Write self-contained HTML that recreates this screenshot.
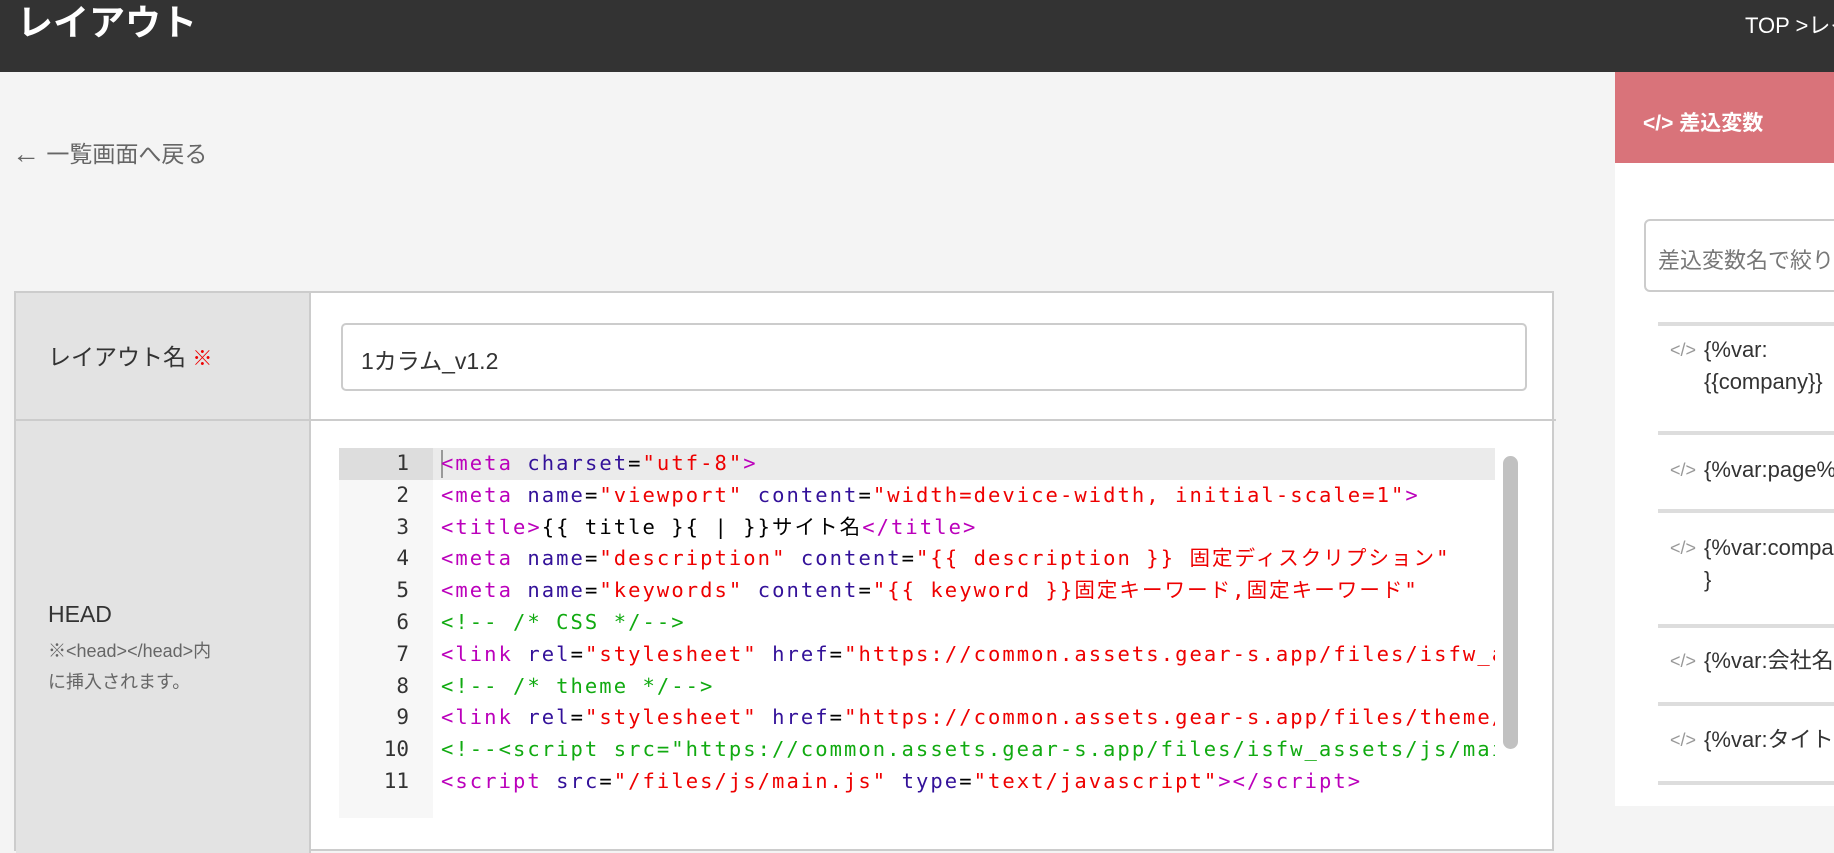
<!DOCTYPE html>
<html><head><meta charset="utf-8">
<style>
*{box-sizing:border-box;margin:0;padding:0}
body{width:1834px;height:806px;overflow:hidden;background:#f4f4f4;font-family:"Liberation Sans","Noto Sans CJK JP",sans-serif;position:relative}
.hdr{position:absolute;left:0;top:0;width:1834px;height:72px;background:#333}
.hdr h1{position:absolute;left:17px;top:0px;color:#fff;font-weight:bold;font-size:36px;line-height:46px}
.crumb{position:absolute;left:1745px;top:8px;color:#fff;font-size:22px;white-space:nowrap}
.back{position:absolute;left:12px;top:139px;color:#666;font-size:23px;line-height:30px}
.back b{font-size:28px;font-weight:normal;vertical-align:-1px}
.tbl{position:absolute;left:14px;top:291px;width:1540px;height:560px;background:#fff;border:2px solid #ccc}
.lab{position:absolute;left:0;top:0;width:295px;height:560px;background:#e3e3e3;border-right:2px solid #ccc}
.rowline{position:absolute;left:0;top:126px;width:1540px;height:2px;background:#ccc}
.l1{position:absolute;left:32px;top:45px;font-size:23px;color:#333}
.l1 span{color:#e00;font-size:20px}
.inp{position:absolute;left:325px;top:30px;width:1186px;height:68px;border:2px solid #ccc;border-radius:5px;font-size:23px;color:#333;padding:17px 18px}
.l2{position:absolute;left:32px;top:308px;font-size:23px;color:#333}
.l2s{position:absolute;left:32px;top:343px;font-size:18px;color:#666;line-height:31px}
.code{position:absolute;left:339px;top:448px;width:1186px;height:370px;background:#fff;overflow:hidden}
.gut{position:absolute;left:0;top:0;width:94px;height:370px;background:#f7f7f7}
.hl{position:absolute;left:0;top:0;width:1156px;height:32px;background:#ebebeb}
.hlg{position:absolute;left:0;top:0;width:94px;height:32px;background:#ddd}
.cur{position:absolute;left:102px;top:2px;width:2px;height:28px;background:#999}
.ln{position:absolute;left:0;top:0;width:70px;text-align:right;font-family:"DejaVu Sans Mono",monospace;font-size:21px;line-height:31.8px;color:#333}
.src{position:absolute;left:102px;top:0;font-family:"DejaVu Sans Mono","Noto Sans CJK JP",monospace;font-size:20.5px;letter-spacing:2.05px;line-height:31.8px;white-space:pre;color:#000;width:1054px;overflow:hidden}
.t{color:#b0b}.a{color:#319}.s{color:#e00}.c{color:#1a1}
.sb{position:absolute;left:1503px;top:456px;width:15px;height:293px;background:#c1c1c1;border-radius:8px}
.rp{position:absolute;left:1615px;top:72px;width:219px;height:734px;background:#fff}
.ph{position:absolute;left:0;top:0;width:219px;height:91px;background:#d9737a;color:#fff;font-size:21px;font-weight:bold;padding:35px 0 0 28px}
.srch{position:absolute;left:29px;top:147px;width:220px;height:73px;border:2px solid #ccc;border-radius:6px;font-size:22px;color:#777;padding:22px 0 0 12px;white-space:nowrap}
.dv{position:absolute;left:43px;width:200px;height:4px;background:#ddd}
.it{position:absolute;left:55px;font-size:22px;color:#333;line-height:32px;white-space:nowrap}
.it i{font-style:normal;color:#999;font-size:18px;margin-right:8px;vertical-align:1px}
.it2{padding-left:34px}
</style></head><body>
<div class="hdr"><h1>レイアウト</h1><div class="crumb">TOP &gt;レイアウト</div></div>
<div class="back"><b>←</b> 一覧画面へ戻る</div>
<div class="tbl">
 <div class="lab"></div>
 <div class="rowline"></div>
 <div class="l1">レイアウト名 <span>※</span></div>
 <div class="inp">1カラム_v1.2</div>
 <div class="l2">HEAD</div>
 <div class="l2s">※&lt;head&gt;&lt;/head&gt;内<br>に挿入されます。</div>
</div>
<div class="code">
 <div class="gut"></div><div class="hl"></div><div class="hlg"></div><div class="cur"></div>
 <div class="ln">1<br>2<br>3<br>4<br>5<br>6<br>7<br>8<br>9<br>10<br>11</div>
 <div class="src"><span class="t">&lt;meta</span> <span class="a">charset</span>=<span class="s">"utf-8"</span><span class="t">&gt;</span>
<span class="t">&lt;meta</span> <span class="a">name</span>=<span class="s">"viewport"</span> <span class="a">content</span>=<span class="s">"width=device-width, initial-scale=1"</span><span class="t">&gt;</span>
<span class="t">&lt;title&gt;</span>{{ title }{ | }}サイト名<span class="t">&lt;/title&gt;</span>
<span class="t">&lt;meta</span> <span class="a">name</span>=<span class="s">"description"</span> <span class="a">content</span>=<span class="s">"{{ description }} 固定ディスクリプション"</span>
<span class="t">&lt;meta</span> <span class="a">name</span>=<span class="s">"keywords"</span> <span class="a">content</span>=<span class="s">"{{ keyword }}固定キーワード,固定キーワード"</span>
<span class="c">&lt;!-- /* CSS */--&gt;</span>
<span class="t">&lt;link</span> <span class="a">rel</span>=<span class="s">"stylesheet"</span> <span class="a">href</span>=<span class="s">"https://common.assets.gear-s.app/files/isfw_assets/css/"</span>
<span class="c">&lt;!-- /* theme */--&gt;</span>
<span class="t">&lt;link</span> <span class="a">rel</span>=<span class="s">"stylesheet"</span> <span class="a">href</span>=<span class="s">"https://common.assets.gear-s.app/files/theme/"</span>
<span class="c">&lt;!--&lt;script src="https://common.assets.gear-s.app/files/isfw_assets/js/main.js"</span>
<span class="t">&lt;script</span> <span class="a">src</span>=<span class="s">"/files/js/main.js"</span> <span class="a">type</span>=<span class="s">"text/javascript"</span><span class="t">&gt;&lt;/script&gt;</span></div>
</div>
<div class="sb"></div>
<div class="rp">
 <div class="ph">&lt;/&gt; 差込変数</div>
 <div class="srch">差込変数名で絞り込み</div>
 <div class="dv" style="top:250px"></div>
 <div class="it" style="top:262px"><i>&lt;/&gt;</i>{%var:<br><span class="it2">{{company}}</span></div>
 <div class="dv" style="top:359px"></div>
 <div class="it" style="top:382px"><i>&lt;/&gt;</i>{%var:page%}</div>
 <div class="dv" style="top:437px"></div>
 <div class="it" style="top:460px"><i>&lt;/&gt;</i>{%var:company<br><span class="it2">}</span></div>
 <div class="dv" style="top:552px"></div>
 <div class="it" style="top:573px"><i>&lt;/&gt;</i>{%var:会社名%}</div>
 <div class="dv" style="top:630px"></div>
 <div class="it" style="top:652px"><i>&lt;/&gt;</i>{%var:タイトル%}</div>
 <div class="dv" style="top:709px"></div>
</div>
</body></html>
